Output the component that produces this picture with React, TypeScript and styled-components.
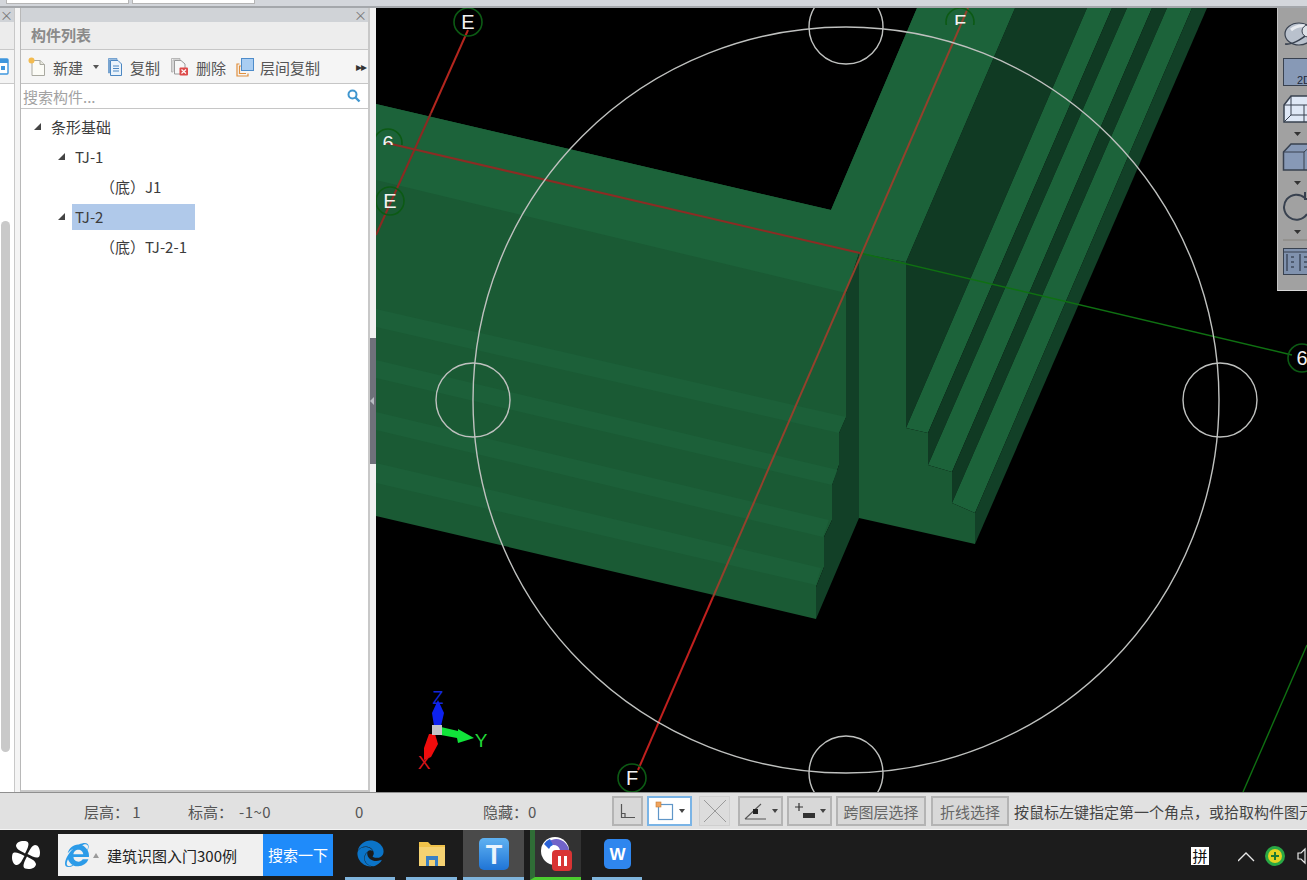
import React from "react";
import styled, { createGlobalStyle } from "styled-components";
import { FaEdge, FaInternetExplorer } from "react-icons/fa";

const Global = createGlobalStyle`
  html, body { margin: 0; padding: 0; background: #1c1c1c; overflow: hidden; }
  * { box-sizing: border-box; }
  #root { width: 1307px; height: 880px; overflow: hidden; }
`;

const FONT = `"Noto Sans CJK SC", "Open Sans", sans-serif`;

const Page = styled.div`
  width: 1307px;
  height: 880px;
  display: flex;
  flex-direction: column;
  font-family: ${FONT};
  font-size: 15px;
  color: #444;
  position: relative;
  overflow: hidden;
`;

const TopStrip = styled.div`
  height: 8px;
  flex: none;
  background: #d3d6db;
  border-bottom: 2px solid #a4a7ab;
  display: flex;
  align-items: flex-start;
  gap: 3px;
  padding-left: 6px;
`;
const TopTab = styled.div`
  width: 123px;
  height: 4px;
  background: #fff;
  border: 1px solid #b5b5b5;
  border-top: none;
`;

const Main = styled.div`
  height: 784px;
  flex: none;
  display: flex;
  background: #f1f1f1;
`;

const Sliver = styled.div`
  width: 15px;
  flex: none;
  display: flex;
  flex-direction: column;
  border-right: 1px solid #c8c8c8;
  background: #fff;
`;
const SliverTitle = styled.div`
  height: 14px;
  background: #d0d3d7;
  color: #777;
  font-size: 13px;
  line-height: 14px;
`;
const SliverHead = styled.div`
  height: 28px;
  background: #ececec;
  border-bottom: 1px solid #c9c9c9;
`;
const SliverTools = styled.div`
  height: 34px;
  background: #f4f4f4;
  border-bottom: 1px solid #c9c9c9;
  display: flex;
  align-items: center;
`;
const SliverBody = styled.div`
  flex: 1;
  padding: 137px 0 40px 1px;
  display: flex;
  flex-direction: column;
`;
const ScrollThumb = styled.div`
  width: 9px;
  flex: 1;
  border-radius: 5px;
  background: #c9c9c9;
`;

const SliverGap = styled.div`
  width: 5px;
  flex: none;
  background: #f4f4f4;
`;

const Panel = styled.div`
  width: 350px;
  flex: none;
  display: flex;
  flex-direction: column;
  background: #fff;
  border-left: 1px solid #b8b8b8;
  border-right: 2px solid #c8c8c8;
  border-bottom: 2px solid #c8c8c8;
`;
const PanelTitleBar = styled.div`
  height: 14px;
  background: #d0d3d7;
  display: flex;
  justify-content: flex-end;
  padding-right: 1px;
  color: #777;
  font-size: 13px;
  line-height: 14px;
`;
const PanelHead = styled.div`
  height: 28px;
  background: #ededed;
  border-bottom: 1px solid #c6c6c6;
  padding-left: 10px;
  font-weight: 700;
  color: #8a8a8a;
  line-height: 25px;
  font-size: 15px;
`;
const Toolbar = styled.div`
  height: 34px;
  background: #f5f5f5;
  border-bottom: 1px solid #c6c6c6;
  display: flex;
  align-items: center;
  padding: 1px 0 0 7px;
  position: relative;
  color: #555;
`;
const ToolItem = styled.div<{ $w: number; $gap?: number }>`
  width: ${(p) => p.$w}px;
  flex: none;
  display: flex;
  align-items: center;
  gap: ${(p) => p.$gap ?? 6}px;
  white-space: nowrap;
`;
const Caret = styled.span`
  width: 0;
  height: 0;
  margin-left: 3px;
  border-left: 3px solid transparent;
  border-right: 3px solid transparent;
  border-top: 4px solid #555;
`;
const More = styled.div`
  position: absolute;
  right: 2px;
  top: 7px;
  font-size: 12px;
  color: #333;
  letter-spacing: -1px;
`;
const Search = styled.div`
  height: 25px;
  border-bottom: 1px solid #c6c6c6;
  display: flex;
  align-items: center;
  justify-content: space-between;
  padding: 0 7px 0 2px;
  color: #a2a2a2;
`;
const Tree = styled.div`
  flex: 1;
  padding-top: 2px;
  display: flex;
  flex-direction: column;
`;
const Row = styled.div<{ $indent: number }>`
  height: 30px;
  display: flex;
  align-items: center;
  padding-left: ${(p) => p.$indent}px;
  color: #3c3c3c;
  white-space: nowrap;
`;
const Tri = styled.span<{ $gap: number }>`
  width: 0;
  height: 0;
  flex: none;
  margin-right: ${(p) => p.$gap}px;
  border-left: 7px solid transparent;
  border-bottom: 7px solid #444;
`;
const Selected = styled.span`
  width: 123px;
  height: 26px;
  background: #b0c9ea;
  line-height: 26px;
  padding-left: 3px;
  margin-top: 2px;
`;

const Splitter = styled.div`
  width: 6px;
  flex: none;
  background: #f1f1f1;
  display: flex;
  flex-direction: column;
  padding-top: 330px;
`;
const SplitGrip = styled.div`
  width: 6px;
  height: 126px;
  background: #6f717a;
  display: flex;
  align-items: center;
`;
const GripArrow = styled.span`
  width: 0;
  height: 0;
  border-top: 4px solid transparent;
  border-bottom: 4px solid transparent;
  border-right: 4px solid #b9bcc2;
`;

const Canvas = styled.div`
  flex: 1;
  background: #000;
  position: relative;
  overflow: hidden;
  svg { display: block; }
`;
const FloatBar = styled.div`
  position: absolute;
  right: 0;
  top: 0;
  width: 30px;
  height: 283px;
  background: #a1a1a1;
  border-left: 1px solid #c4c4c4;
  border-bottom: 1px solid #d8d8d8;
  overflow: hidden;
`;

const Status = styled.div`
  height: 37px;
  flex: none;
  background: #e1e1e1;
  border-top: 1px solid #8f8f8f;
  display: flex;
  align-items: center;
  white-space: nowrap;
  color: #555;
  font-size: 15px;
  overflow: hidden;
`;
const StatusText = styled.div<{ $w: number }>`
  width: ${(p) => p.$w}px;
  flex: none;
`;
const StatusValue = styled.span`
  margin-left: 6px;
  letter-spacing: 0.5px;
`;
const StatusBtn = styled.div<{ $w: number; $gap: number; $active?: boolean; $off?: boolean }>`
  width: ${(p) => p.$w}px;
  margin-right: ${(p) => p.$gap}px;
  height: 30px;
  flex: none;
  display: flex;
  align-items: center;
  justify-content: center;
  gap: 4px;
  font-size: 15px;
  color: #666;
  background: ${(p) => (p.$active ? "#fff" : p.$off ? "#dcdcdc" : "#d8d8d8")};
  border: ${(p) => (p.$active ? "2px solid #7ab4e6" : p.$off ? "1px solid #cfcfcf" : "2px solid #b4b4b4")};
`;
const SmallCaret = styled.span`
  width: 0;
  height: 0;
  border-left: 3px solid transparent;
  border-right: 3px solid transparent;
  border-top: 4px solid #444;
`;
const Hint = styled.div`
  flex: none;
  font-size: 15px;
  color: #444;
  padding-left: 5px;
`;

const Taskbar = styled.div`
  height: 51px;
  flex: none;
  background: #1c1c1c;
  border-top: 1px solid #f4f4f4;
  display: flex;
  position: relative;
`;
const StartCell = styled.div`
  width: 58px;
  flex: none;
  display: flex;
  align-items: center;
  justify-content: center;
  padding-right: 6px;
`;
const SearchBox = styled.div`
  width: 205px;
  height: 42px;
  margin-top: 4px;
  flex: none;
  background: #f0f0f0;
  color: #222;
  display: flex;
  align-items: center;
  padding-left: 7px;
  white-space: nowrap;
  font-size: 15px;
`;
const UpTri = styled.span`
  width: 0;
  height: 0;
  margin: 0 8px 0 4px;
  border-left: 3px solid transparent;
  border-right: 3px solid transparent;
  border-bottom: 5px solid #9a9a9a;
`;
const SearchBtn = styled.div`
  width: 70px;
  height: 42px;
  margin-top: 4px;
  flex: none;
  background: #1f8bfa;
  color: #fff;
  text-align: center;
  line-height: 41px;
  font-size: 15px;
`;
const Apps = styled.div`
  display: flex;
  padding-left: 12px;
  flex: none;
`;
const AppCell = styled.div<{ $w: number; $gap: number; $bg?: string; $line: string; $left?: boolean }>`
  width: ${(p) => p.$w}px;
  margin-right: ${(p) => p.$gap}px;
  height: 50px;
  flex: none;
  background: ${(p) => p.$bg || "transparent"};
  border-bottom: 3px solid ${(p) => p.$line};
  border-left: ${(p) => (p.$left ? "5px solid #2f6d36" : "none")};
  display: flex;
  align-items: center;
  justify-content: center;
`;
const RecWrap = styled.span`
  display: flex;
  margin-right: 4px;
`;
const Tray = styled.div`
  position: absolute;
  left: 1191px;
  top: 14px;
  display: flex;
  align-items: center;
`;
const Ime = styled.div`
  width: 18px;
  height: 18px;
  background: #fff;
  color: #111;
  font-size: 15px;
  line-height: 18px;
  text-align: center;
  margin-right: 29px;
`;

const GREEN = "#1a5a34";
const LIGHT = "#1c6039";
const STRIP = "#1c633a";
const DARK = "#103a23";
const END = "#124027";
const CIRCLE = "#bfc1bf";

const bands = [
  "376,309 846,417 839,433 376,327",
  "376,360 838,470 832,485 376,378",
  "376,412 829,520 823,537 376,430",
  "376,463 821,568 816,585 376,483",
];

function AxisMark({ x, y, t, clipId }: { x: number; y: number; t: string; clipId?: string }) {
  return (
    <g clipPath={clipId ? `url(#${clipId})` : undefined}>
      <circle cx={x} cy={y} r={14} fill="none" stroke="#0c5a14" strokeWidth={1.6} />
      <text x={x} y={y + 7} textAnchor="middle" fontSize={20} fontFamily="Liberation Sans, sans-serif" fill="#f2f2f2">
        {t}
      </text>
    </g>
  );
}

function Scene() {
  return (
    <svg width={931} height={784} viewBox="376 8 931 784">
      <defs>
        <clipPath id="six"><rect x="376" y="125" width="40" height="20" /></clipPath>
        <clipPath id="topF"><rect x="930" y="8" width="60" height="17" /></clipPath>
      </defs>
      {/* horizontal beam */}
      <polygon points="376,104 831,210 917,8 1015,8 906,262 859,253 846,293 846,417 839,433 839,465 832,485 832,520 824,537 824,567 816,587 816,619 376,516" fill={GREEN} />
      <polygon points="376,104 831,210 917,8 1015,8 906,262 859,253 846,293 376,180" fill={STRIP} />
      {bands.map((b) => (
        <polygon key={b} points={b} fill={LIGHT} />
      ))}
      {/* end face of horizontal beam */}
      <polygon points="859,253 846,293 846,417 839,433 839,465 832,485 832,520 824,537 824,567 816,587 816,619 859,518" fill={END} />
      {/* vertical beam */}
      <polygon points="1015,8 1087,8 906,428 906,262" fill={DARK} />
      <polygon points="1087,8 1112,8 928,433 906,428" fill={STRIP} />
      <polygon points="1112,8 1127,8 928,465 928,433" fill={DARK} />
      <polygon points="1127,8 1152,8 952,472 928,465" fill={STRIP} />
      <polygon points="1152,8 1167,8 952,503 952,472" fill={DARK} />
      <polygon points="1167,8 1192,8 975,513 952,503" fill={STRIP} />
      <polygon points="1192,8 1207,8 975,544 975,513" fill={END} />
      <polygon points="859,253 906,262 906,428 928,433 928,465 952,472 952,503 975,513 975,544 859,518" fill={GREEN} />
      {/* grid lines */}
      <line x1="860" y1="253" x2="1292" y2="355" stroke="#0f7012" strokeWidth={1.4} />
      <line x1="1307" y1="645" x2="1243" y2="792" stroke="#0f7012" strokeWidth={1.4} />
      <line x1="468" y1="30" x2="431" y2="113" stroke="#b3261e" strokeWidth={2} />
      <line x1="431" y1="113" x2="376" y2="235" stroke="#8b2a22" strokeWidth={2} />
      <line x1="387" y1="143" x2="860" y2="253" stroke="#8b2c24" strokeWidth={2} />
      <line x1="968" y1="8" x2="713" y2="597" stroke="#93412c" strokeWidth={2} />
      <line x1="713" y1="597" x2="638" y2="770" stroke="#c0201e" strokeWidth={2} />
      {/* circles */}
      <circle cx={846} cy={400} r={373} fill="none" stroke={CIRCLE} strokeWidth={1.4} />
      <circle cx={846} cy={27} r={37} fill="none" stroke={CIRCLE} strokeWidth={1.4} />
      <circle cx={846} cy={773} r={37} fill="none" stroke={CIRCLE} strokeWidth={1.4} />
      <circle cx={473} cy={400} r={37} fill="none" stroke={CIRCLE} strokeWidth={1.4} />
      <circle cx={1220} cy={400} r={37} fill="none" stroke={CIRCLE} strokeWidth={1.4} />
      {/* axis marks */}
      <AxisMark x={468} y={22} t="E" />
      <AxisMark x={390} y={201} t="E" />
      <AxisMark x={388} y={143} t="6" clipId="six" />
      <AxisMark x={960} y={22} t="F" clipId="topF" />
      <AxisMark x={632} y={778} t="F" />
      <AxisMark x={1302} y={358} t="6" />
      {/* gizmo */}
      <text x={438} y={704} textAnchor="middle" fontSize={18} fill="#1226d8" fontFamily="Liberation Sans, sans-serif">Z</text>
      <polygon points="438,700 444,713 441,726 434,726 432,713" fill="#0d22f0" />
      <polygon points="441,727 458,731 458,729 474,738 458,743 457,738 441,735" fill="#11e43a" />
      <text x={481} y={747} textAnchor="middle" fontSize={19} fill="#22d838" fontFamily="Liberation Sans, sans-serif">Y</text>
      <polygon points="435,734 438,744 431,757 424,760 424,748 429,734" fill="#f00c0c" />
      <text x={424} y={769} textAnchor="middle" fontSize={19} fill="#d8141a" fontFamily="Liberation Sans, sans-serif">X</text>
      <rect x="432" y="725" width="10" height="10" fill="#c4c4c8" />
    </svg>
  );
}

function FloatIcons() {
  const s = "#38414f";
  const f = "#8799b6";
  return (
    <svg width={30} height={283} viewBox="1277 8 30 283">
      {/* sphere */}
      <ellipse cx={1298} cy={34} rx={14} ry={11} fill="#b9c1cd" stroke={s} strokeWidth={1.2} />
      <path d="M1284 44 C1292 45 1304 38 1312 28" stroke={s} strokeWidth={1.6} fill="none" />
      <path d="M1290 30 Q1296 25 1304 26" stroke="#e8ebf0" strokeWidth={3} fill="none" />
      <circle cx={1307} cy={31} r={6} fill="#dde1e7" stroke={s} />
      {/* 2D */}
      <rect x={1282.5} y={58.5} width={30} height={27} fill={f} stroke={s} />
      <text x={1296} y={84} fontSize={11} fill="#20283a" fontFamily="Liberation Sans, sans-serif">2D</text>
      {/* wire cube */}
      <path d="M1283 105 L1290 96 H1312 V122 H1283 Z" fill="#dfe8f6" stroke={s} strokeWidth={1.5} />
      <path d="M1283 105 H1312 M1290 96 V115 H1312 M1290 115 L1283 122 M1303 105 V122" stroke={s} fill="none" />
      <polygon points="1293,132 1300,132 1296.5,136" fill="#333" />
      {/* solid cube */}
      <path d="M1282.5 152 L1290 144 H1312 V170 H1282.5 Z" fill={f} stroke={s} strokeWidth={1.5} />
      <path d="M1282.5 152 H1303 V170 M1303 152 L1312 144" stroke={s} fill="none" />
      <polygon points="1293,181 1300,181 1296.5,185" fill="#333" />
      {/* rotate */}
      <path d="M1304 198 A12.5 12.5 0 1 0 1306 214" stroke={s} strokeWidth={2} fill="none" />
      <path d="M1304 192 V199 H1311" stroke={s} strokeWidth={2} fill="none" />
      <polygon points="1293,230 1300,230 1296.5,234" fill="#333" />
      <line x1="1282" y1="240" x2="1307" y2="240" stroke="#85827c" />
      {/* list */}
      <rect x={1282.5} y={248.5} width={30} height={26} fill="#8092ae" stroke={s} />
      <path d="M1286 254 v17 M1290 257 h3 M1290 262 h3 M1290 267 h3 M1299 254 v17 M1303 257 h3 M1303 262 h3 M1303 267 h3" stroke="#1f2634" fill="none" />
      <line x1="1282" y1="252" x2="1312" y2="252" stroke={s} />
    </svg>
  );
}

const NewIcon = () => (
  <svg width={18} height={20} viewBox="0 0 18 20">
    <path d="M4 3.5 H12 L16.5 7.5 V18.5 H4 Z" fill="#fbfbf6" stroke="#a9a9a0" />
    <path d="M12 3.5 V7.5 H16.5" fill="#e8e8df" stroke="#a9a9a0" />
    <circle cx={3.5} cy={3.5} r={3} fill="#f3bb4f" />
  </svg>
);
const CopyIcon = () => (
  <svg width={16} height={18} viewBox="0 0 16 18">
    <path d="M1.5 0.5 H10 V2 H2.5 V15 H1.5 Z" fill="#bcd6ef" stroke="#5f93c7" strokeWidth={0.8} />
    <path d="M3.5 2.5 H11 L14.5 6 V17.5 H3.5 Z" fill="#eaf3fb" stroke="#4c87c2" />
    <path d="M6 8 H12 M6 10.5 H12 M6 13 H12" stroke="#4c87c2" />
  </svg>
);
const DeleteIcon = () => (
  <svg width={18} height={18} viewBox="0 0 18 18">
    <path d="M0.5 0.5 H9 V2 H2 V14 H0.5 Z" fill="#f1f1f1" stroke="#a8a8a8" strokeWidth={0.8} />
    <path d="M3.5 2.5 H10 L14 6 V16 H3.5 Z" fill="#f7f7f7" stroke="#9a9a9a" />
    <rect x={8.5} y={9.5} width={8.5} height={8} rx={1} fill="#dd4b4b" />
    <path d="M10.5 11.5 L15 15.5 M15 11.5 L10.5 15.5" stroke="#fff" strokeWidth={1.2} />
  </svg>
);
const LayerIcon = () => (
  <svg width={18} height={19} viewBox="0 0 18 19">
    <path d="M3.5 6 H1 V18 H12 V15.5" fill="none" stroke="#e08f3e" strokeWidth={1.2} />
    <path d="M5.5 8 H3.5 V15.5 H10" fill="none" stroke="#e08f3e" strokeWidth={1.2} />
    <rect x={5.5} y={0.5} width={12} height={12} fill="#a9cdf2" stroke="#4e8cca" />
  </svg>
);
const SearchIcon = () => (
  <svg width={14} height={14} viewBox="0 0 14 14">
    <circle cx={5.5} cy={5.5} r={4} fill="none" stroke="#3f96cf" strokeWidth={2} />
    <line x1={8.5} y1={8.5} x2={12.5} y2={12.5} stroke="#3f96cf" strokeWidth={2.4} />
  </svg>
);
const SliverIcon = () => (
  <svg width={9} height={18} viewBox="0 0 9 18">
    <rect x={-6} y={1} width={14} height={15} rx={1} fill="#fff" stroke="#3f96dd" strokeWidth={1.4} />
    <rect x={-6} y={1} width={14} height={4} fill="#3f96dd" />
    <rect x={1} y={8} width={4} height={4} fill="#3f96dd" />
  </svg>
);

const Pinwheel = () => (
  <svg width={28} height={30} viewBox="-14 -15 28 30">
    {[0, 90, 180, 270].map((r) => (
      <path
        key={r}
        transform={`rotate(${r})`}
        d="M-1 -1.5 C-5 -4 -9 -5 -10 -9 C-10 -13 -4 -15 1 -13.5 C4 -12 2 -7 -1 -1.5 Z"
        fill="#fff"
      />
    ))}
  </svg>
);
const FolderIcon = () => (
  <svg width={28} height={30} viewBox="0 0 28 30">
    <path d="M1 3 H10 L13 6 H27 V26 H1 Z" fill="#f0c24a" />
    <rect x={1} y={8} width={26} height={19} fill="#f5d272" />
    <path d="M8 27 V17 H20 V27 H17 V21 H11 V27 Z" fill="#3a80c4" />
  </svg>
);
const TIcon = () => (
  <svg width={30} height={34} viewBox="0 0 30 34">
    <defs>
      <linearGradient id="tg" x1="0" y1="0" x2="0" y2="1">
        <stop offset="0" stopColor="#5fb2f2" />
        <stop offset="1" stopColor="#1f74d6" />
      </linearGradient>
    </defs>
    <rect x={0} y={1} width={30} height={32} rx={5} fill="url(#tg)" />
    <text x={15} y={27} textAnchor="middle" fontSize={27} fontWeight={700} fill="#eaf4fc" fontFamily="Liberation Sans, sans-serif">T</text>
  </svg>
);
const RecIcon = () => (
  <svg width={32} height={36} viewBox="0 0 32 36">
    <circle cx={15} cy={15} r={14} fill="#fff" />
    <path d="M8 6 A13 13 0 0 1 29 14 L20 14 A7 7 0 0 0 13 9 Z" fill="#7163c9" />
    <path d="M4 8 A13 13 0 0 1 10 3 L13 9 A7 7 0 0 0 9 13 Z" fill="#2a62d8" />
    <rect x={12} y={14} width={20} height={21} rx={4} fill="#d93434" />
    <rect x={18} y={20} width={3} height={10} fill="#fff" />
    <rect x={24} y={20} width={3} height={10} fill="#fff" />
  </svg>
);
const WpsIcon = () => (
  <svg width={27} height={30} viewBox="0 0 27 30">
    <rect x={0} y={0} width={27} height={30} rx={5} fill="#2f86ee" />
    <text x={13.5} y={21} textAnchor="middle" fontSize={17} fontWeight={700} fill="#fff" fontFamily="Liberation Sans, sans-serif">W</text>
  </svg>
);

export default function App() {
  return (
    <Page>
      <Global />
      <TopStrip>
        <TopTab />
        <TopTab />
      </TopStrip>
      <Main>
        <Sliver>
          <SliverTitle>×</SliverTitle>
          <SliverHead />
          <SliverTools>
            <SliverIcon />
          </SliverTools>
          <SliverBody>
            <ScrollThumb />
          </SliverBody>
        </Sliver>
        <SliverGap />
        <Panel>
          <PanelTitleBar>×</PanelTitleBar>
          <PanelHead>构件列表</PanelHead>
          <Toolbar>
            <ToolItem $w={79} $gap={7}>
              <NewIcon />
              <span>新建</span>
              <Caret />
            </ToolItem>
            <ToolItem $w={64} $gap={7}>
              <CopyIcon />
              <span>复制</span>
            </ToolItem>
            <ToolItem $w={65} $gap={7}>
              <DeleteIcon />
              <span>删除</span>
            </ToolItem>
            <ToolItem $w={90}>
              <LayerIcon />
              <span>层间复制</span>
            </ToolItem>
            <More>▸▸</More>
          </Toolbar>
          <Search>
            <span>搜索构件...</span>
            <SearchIcon />
          </Search>
          <Tree>
            <Row $indent={13}>
              <Tri $gap={10} />
              <span>条形基础</span>
            </Row>
            <Row $indent={37}>
              <Tri $gap={10} />
              <span>TJ-1</span>
            </Row>
            <Row $indent={79}>（底）J1</Row>
            <Row $indent={37}>
              <Tri $gap={7} />
              <Selected>TJ-2</Selected>
            </Row>
            <Row $indent={79}>（底）TJ-2-1</Row>
          </Tree>
        </Panel>
        <Splitter>
          <SplitGrip>
            <GripArrow />
          </SplitGrip>
        </Splitter>
        <Canvas>
          <Scene />
          <FloatBar>
            <FloatIcons />
          </FloatBar>
        </Canvas>
      </Main>
      <Status>
        <StatusText $w={84} />
        <StatusText $w={104}>层高： 1</StatusText>
        <StatusText $w={167}>标高：<StatusValue>-1~0</StatusValue></StatusText>
        <StatusText $w={128}>0</StatusText>
        <StatusText $w={129}>隐藏：0</StatusText>
        <StatusBtn $w={31} $gap={4}>
          <svg width={18} height={18} viewBox="0 0 18 18">
            <path d="M2.5 2 V15.5 H16 M2 11.5 H6 V15" stroke="#555" strokeWidth={1.2} fill="none" />
          </svg>
        </StatusBtn>
        <StatusBtn $w={45} $gap={7} $active>
          <svg width={20} height={20} viewBox="0 0 20 20">
            <rect x={3.5} y={3.5} width={14} height={15} fill="#fff" stroke="#5f96c8" strokeWidth={1.2} />
            <rect x={1} y={1} width={5} height={5} fill="#f0a35c" stroke="#c67c34" strokeWidth={0.6} />
          </svg>
          <SmallCaret />
        </StatusBtn>
        <StatusBtn $w={31} $gap={8} $off>
          <svg width={26} height={26} viewBox="0 0 26 26">
            <path d="M2 2 L24 24 M24 2 L2 24" stroke="#9a9a9a" strokeWidth={1} />
          </svg>
        </StatusBtn>
        <StatusBtn $w={45} $gap={4}>
          <svg width={24} height={20} viewBox="0 0 24 20">
            <path d="M1 18 H22 M1 18 L17 3" stroke="#555" strokeWidth={1.1} fill="none" />
            <rect x={9} y={8} width={5} height={5} fill="#222" />
          </svg>
          <SmallCaret />
        </StatusBtn>
        <StatusBtn $w={45} $gap={4}>
          <svg width={22} height={20} viewBox="0 0 22 20">
            <path d="M1 6 H9 M5 2 V10" stroke="#333" strokeWidth={1.2} />
            <rect x={9} y={12} width={12} height={5} fill="#333" />
          </svg>
          <SmallCaret />
        </StatusBtn>
        <StatusBtn $w={90} $gap={5}>跨图层选择</StatusBtn>
        <StatusBtn $w={78} $gap={0}>折线选择</StatusBtn>
        <Hint>按鼠标左键指定第一个角点，或拾取构件图元</Hint>
      </Status>
      <Taskbar>
        <StartCell>
          <Pinwheel />
        </StartCell>
        <SearchBox>
          <FaInternetExplorer size={24} color="#2c9be8" />
          <UpTri />
          建筑识图入门300例
        </SearchBox>
        <SearchBtn>搜索一下</SearchBtn>
        <Apps>
          <AppCell $w={50} $gap={11} $line="#7fb4dc">
            <FaEdge size={27} color="#0b74c8" />
          </AppCell>
          <AppCell $w={51} $gap={6} $line="#7fb4dc">
            <FolderIcon />
          </AppCell>
          <AppCell $w={61} $gap={6} $bg="#4a4a4a" $line="#7fb4dc">
            <TIcon />
          </AppCell>
          <AppCell $w={51} $gap={11} $bg="#323232" $line="#4ccd2f" $left>
            <RecWrap>
              <RecIcon />
            </RecWrap>
          </AppCell>
          <AppCell $w={50} $gap={0} $line="#7fb4dc">
            <WpsIcon />
          </AppCell>
        </Apps>
        <Tray>
          <Ime>拼</Ime>
          <svg width={90} height={24} viewBox="0 0 90 24">
            <path d="M0 17 L8 9 L16 17" stroke="#e8e8e8" strokeWidth={1.3} fill="none" />
            <circle cx={37} cy={12} r={10} fill="#29a845" />
            <circle cx={37} cy={12} r={7} fill="#e4d321" />
            <path d="M33 12 H41 M37 8 V16" stroke="#1d7a33" strokeWidth={2} />
            <path d="M60 9 H63 L67 5 V19 L63 15 H60 Z" stroke="#e8e8e8" strokeWidth={1.2} fill="none" />
          </svg>
        </Tray>
      </Taskbar>
    </Page>
  );
}
